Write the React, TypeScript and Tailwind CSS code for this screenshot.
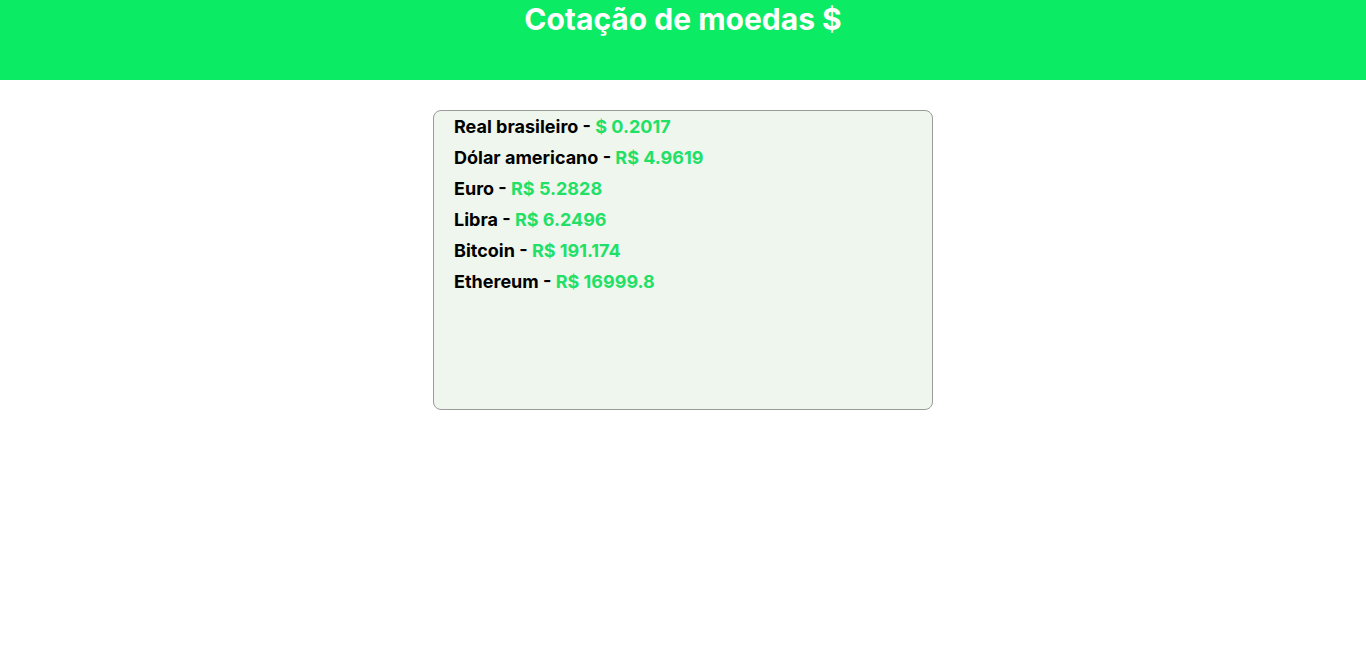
const rates = [
  { name: "Real brasileiro", value: "$ 0.2017" },
  { name: "Dólar americano", value: "R$ 4.9619" },
  { name: "Euro", value: "R$ 5.2828" },
  { name: "Libra", value: "R$ 6.2496" },
  { name: "Bitcoin", value: "R$ 191.174" },
  { name: "Ethereum", value: "R$ 16999.8" },
];

export default function App() {
  return (
    <div className="min-h-screen bg-white font-['Inter',sans-serif]">
      <header className="flex h-[80px] justify-center bg-[#0beb64]">
        <h1 className="mt-[1px] text-[30px] font-bold leading-[36px] text-white">Cotação de moedas $</h1>
      </header>

      <main className="flex justify-center pt-[30px]">
        <ul className="h-[300px] w-[500px] rounded-lg border border-[#9a9a9a] bg-[#eff6ee] px-5">
          {rates.map((r) => (
            <li key={r.name} className="text-[18px] font-bold leading-[31px] text-black">
              {r.name} - <span className="text-[#22e066]">{r.value}</span>
            </li>
          ))}
        </ul>
      </main>
    </div>
  );
}
